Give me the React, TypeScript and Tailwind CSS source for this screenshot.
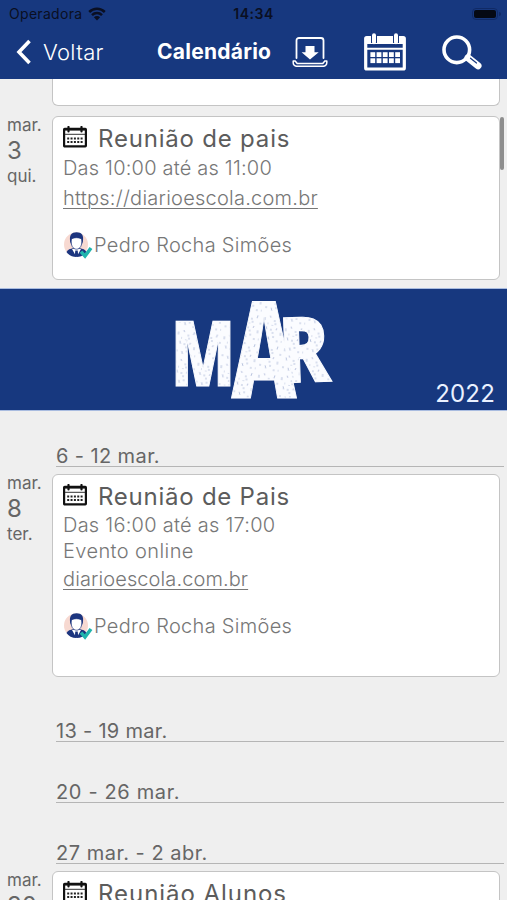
import React from 'react';

interface CalendarEvent {
  month: string;
  day: string;
  weekday: string;
  title: string;
  titleClass: string;
  time?: string;
  timeClass?: string;
  place?: string;
  link?: string;
  linkClass?: string;
  author?: string;
  height: string;
}

const events: Record<string, CalendarEvent> = {
  first: {
    month: 'mar.',
    day: '3',
    weekday: 'qui.',
    title: 'Reunião de pais',
    titleClass: 'tracking-[0.8px]',
    time: 'Das 10:00 até as 11:00',
    timeClass: 'mt-[2px]',
    link: 'https://diarioescola.com.br',
    linkClass: 'mt-[4px] tracking-[0.24px]',
    author: 'Pedro Rocha Simões',
    height: 'h-[164px]',
  },
  second: {
    month: 'mar.',
    day: '8',
    weekday: 'ter.',
    title: 'Reunião de Pais',
    titleClass: 'tracking-[0.75px]',
    time: 'Das 16:00 até as 17:00',
    timeClass: 'mt-[1px] tracking-[0.25px]',
    place: 'Evento online',
    link: 'diarioescola.com.br',
    linkClass: 'mt-[2px] tracking-[0.1px]',
    author: 'Pedro Rocha Simões',
    height: 'h-[203px]',
  },
  third: {
    month: 'mar.',
    day: '30',
    weekday: 'qua.',
    title: 'Reunião Alunos',
    titleClass: 'tracking-[0.95px]',
    height: 'h-[164px]',
  },
};

const WifiIcon = () => (
  <svg className="h-[14px] w-[18px]" viewBox="0 0 18 14">
    <path d="M9 13.4 5.9 10.2a4.4 4.4 0 0 1 6.2 0z" fill="#0a0f22" />
    <path d="M4 8.1a7.2 7.2 0 0 1 10 0M1.2 5a11.2 11.2 0 0 1 15.6 0" fill="none" stroke="#0a0f22" strokeWidth="2.5" />
  </svg>
);

const DownloadIcon = () => (
  <svg className="h-[32px] w-[36px]" viewBox="0 0 36 32" fill="none" stroke="#fff" strokeLinecap="round" strokeLinejoin="round">
    <path d="M4.5 22V4.5A2.5 2.5 0 0 1 7 2h22a2.5 2.5 0 0 1 2.5 2.5V22" strokeWidth="1.8" />
    <path d="M1.2 25v1.7a3.5 3.5 0 0 0 3.5 3.500h26.600a3.500 3.500 0 0 0 3.500-3.500V25M1.200 25h2l2 2.500h25.600l2-2.500h2" strokeWidth="1.500" />
    <path d="M13.500 10h9v6.200h4.200L18 23.500 9.600 16.200h3.900z" fill="#fff" stroke="none" />
  </svg>
);

const CalendarIcon = () => (
  <svg className="h-[38px] w-[42px]" viewBox="0 0 42 38">
    <rect x="1.700" y="4.500" width="38.600" height="31.500" rx="1" fill="none" stroke="#fff" strokeWidth="3.200" />
    <rect x="1" y="4" width="40" height="7" fill="#fff" />
    <path d="M2 15.800h38" stroke="#fff" strokeWidth="2" />
    <path d="M10 3v7M32 3v7" stroke="#17387f" strokeWidth="6" />
    <path d="M10 2.200v7M32 2.200v7" stroke="#fff" strokeWidth="4" strokeLinecap="round" />
    {[7, 13.2, 19.4, 25.6, 31.8].map((x) => (
      <g key={x} fill="#fff">
        <rect x={x - 0.6} y="19.200" width="4.800" height="4.800" />
        <rect x={x - 0.6} y="25.300" width="4.800" height="4.800" />
      </g>
    ))}
  </svg>
);

const SearchIcon = () => (
  <svg className="h-[35px] w-[40px]" viewBox="0 0 40 35">
    <circle cx="14.800" cy="14.800" r="12.800" fill="none" stroke="#fff" strokeWidth="3.600" />
    <path d="m26 22.800 10 8" stroke="#fff" strokeWidth="7" strokeLinecap="round" />
    <path d="m28.500 23.200 6 4.800" stroke="#17387f" strokeWidth="1.200" strokeLinecap="round" />
  </svg>
);

const EventIcon = () => (
  <svg className="-mt-[4px] h-[22px] w-[24px] shrink-0" viewBox="0 0 24 22">
    <rect x="1.100" y="2.900" width="21.800" height="17.500" rx="0.600" fill="none" stroke="#111" strokeWidth="2.200" />
    <path d="M1 3.500h22" stroke="#111" strokeWidth="2.200" />
    <path d="M2 8.300h20" stroke="#333" strokeWidth="1" />
    <path d="M5.500 1v4.500M18.500 1v4.500" stroke="#111" strokeWidth="2.200" strokeLinecap="round" />
    <path d="M4.200 12.500h15.800M4.200 16h15.800" stroke="#222" strokeWidth="2.100" strokeDasharray="2 1.350" />
  </svg>
);

const AuthorIcon = () => (
  <svg className="h-[28px] w-[30px] shrink-0" viewBox="0 0 30 28">
    <circle cx="12" cy="13.500" r="12" fill="#f7d9d1" />
    <path d="M2.500 21c1-2.500 4-3.200 6.500-3.700h7c2.500.5 5.500 1.200 6.500 3.700-2.200 3-5.600 5-10 5s-8-2-10-5z" fill="#1c357f" />
    <path d="m8 18 4.500 8L17 18z" fill="#fff" />
    <path d="m11.300 19.500h2.400l.5 5-1.700 1.500-1.700-1.500z" fill="#1c357f" />
    <path d="M6.200 11C5 3.900 7.500 1.300 12.600 1.300S20 3.900 18.800 11l-1 2.500H7.300z" fill="#1c357f" />
    <path d="M7.400 8c1.300-.5 2.200-1.300 5.100-1.300s3.800.8 5.100 1.300c.9 6.100-1.300 10.200-5.100 10.200S6.500 14.100 7.400 8z" fill="#fff" stroke="#1c357f" strokeWidth=".7" />
    <path d="m17 20.600 4 4.500L27 17" fill="none" stroke="#20b5ad" strokeWidth="3.500" />
  </svg>
);

const MonthArt = () => (
  <svg className="h-[110px] w-[170px] overflow-visible" viewBox="0 0 170 110" fontFamily="'Open Sans', sans-serif" fontWeight="800">
    <defs>
      <pattern id="chalk" width="23" height="29" patternUnits="userSpaceOnUse" patternTransform="rotate(6)">
        <rect width="23" height="29" fill="#fbfcff" />
        <path
          d="M2 3v3M7 1l1 2M12 5v2M13 8v2M18 2l-1 3M21 9v2M4 12l1 3M9 14v2M10 10v1M15 13l-1 2M19 17v3M2 21v2M7 22l1 3M12 21v2M16 25v2M5 9h1M10 18h2M20 26h1"
          stroke="#8a9ac6"
          strokeWidth=".6"
        />
      </pattern>
    </defs>
    <g stroke="#fbfcff" strokeWidth="1.200">
      <text transform="translate(3 91)" fontSize="91" textLength="64" lengthAdjust="spacingAndGlyphs" fill="url(#chalk)">M</text>
      <text transform="translate(112 88) rotate(-2)" fontSize="91" textLength="51" lengthAdjust="spacingAndGlyphs" fill="url(#chalk)">R</text>
      <text transform="translate(63.500 103)" fontSize="134" textLength="65" lengthAdjust="spacingAndGlyphs" fill="url(#chalk)">A</text>
    </g>
  </svg>
);

const Header: React.FC = () => (
  <header className="h-[79px] shrink-0 bg-[#17387f]">
    <div className="grid h-[27px] grid-cols-3 items-center pl-[9px] pr-[6px] text-[14px] leading-none text-[#0a0f22]">
      <div className="flex items-center gap-[6px]">
        <span className="tracking-[0.3px]">Operadora</span>
        <WifiIcon />
      </div>
      <span className="-ml-[3px] text-center font-semibold tracking-[0.5px]">14:34</span>
      <div className="flex items-center justify-end gap-px">
        <div className="h-[12px] w-[26px] rounded-[4px] border border-[#102a66] bg-[#050914] bg-clip-content p-px" />
        <div className="h-[4px] w-[2px] rounded-r bg-[#102a66]" />
      </div>
    </div>
    <div className="flex h-[50px] items-center text-white">
      <svg className="ml-[16px] h-[26px] w-[16px]" viewBox="0 0 16 26" fill="none">
        <path d="M13.500 2 3 13l10.500 11" stroke="#fff" strokeWidth="3.600" />
      </svg>
      <span className="ml-[11px] w-[114px] text-[22px] font-light tracking-[0.3px]">Voltar</span>
      <h1 className="w-[135px] whitespace-nowrap text-[21px] font-bold tracking-[0.25px]">Calendário</h1>
      <DownloadIcon />
      <div className="ml-[36px]"><CalendarIcon /></div>
      <div className="ml-[36px]"><SearchIcon /></div>
    </div>
  </header>
);

const EventRow: React.FC<{ event: CalendarEvent }> = ({ event }) => (
  <div className="flex shrink-0">
    <div className="flex w-[52px] shrink-0 flex-col pl-[7px] text-[17px] leading-[18px] text-[#666]">
      <span>{event.month}</span>
      <span className="mb-[3px] mt-[4px] text-[24px] leading-[26px]">{event.day}</span>
      <span>{event.weekday}</span>
    </div>
    <div className={`w-[448px] rounded-[6px] border-[1.5px] border-[#c4c4c4] bg-white pl-[10px] pt-[8px] ${event.height}`}>
      <div className="flex items-center gap-[11px]">
        <EventIcon />
        <span className={`text-[24px] leading-[28px] text-[#5c5c5c] ${event.titleClass}`}>{event.title}</span>
      </div>
      <div className="flex flex-col items-start text-[20px] font-light leading-[26px] tracking-[0.2px] text-[#777]">
        {event.time && <span className={event.timeClass}>{event.time}</span>}
        {event.place && <span className="tracking-[0.4px]">{event.place}</span>}
        {event.link && <a className={`underline decoration-1 underline-offset-[3px] ${event.linkClass}`}>{event.link}</a>}
      </div>
      {event.author && (
        <div className="ml-px mt-[20px] flex items-center text-[20px] font-light leading-[28px] tracking-[0.3px] text-[#777]">
          <AuthorIcon />
          <span>{event.author}</span>
        </div>
      )}
    </div>
  </div>
);

const WeekLabel: React.FC<{ children: React.ReactNode; className: string }> = ({ children, className }) => (
  <div className={`ml-[56px] mr-[3px] h-[25px] shrink-0 border-b-[1.5px] border-[#b5b5b5] text-[20px] leading-[29px] text-[#666] ${className}`}>
    {children}
  </div>
);

const App: React.FC = () => {
  return (
    <div className="relative flex h-[900px] w-[507px] flex-col overflow-hidden bg-[#efefef] font-['Inter',sans-serif]">
      <Header />
      <div className="ml-[52px] h-[27px] w-[448px] shrink-0 rounded-b-[6px] border-[1.5px] border-t-0 border-[#c4c4c4] bg-white" />
      <div className="mt-[10px] shrink-0">
        <EventRow event={events.first} />
      </div>

      <section className="mt-[8px] flex h-[123px] shrink-0 items-end justify-between border-y border-[#a9bce0] bg-[#17387f]">
        <div className="mb-[5px] ml-[168px]"><MonthArt /></div>
        <span className="mb-[3px] mr-[12px] text-[24px] leading-[26px] tracking-[0.2px] text-[#eaf1ff]">2022</span>
      </section>

      <div className="mt-[31px]"><WeekLabel className="tracking-[0.4px]">6 - 12 mar.</WeekLabel></div>
      <div className="mt-[7px]"><EventRow event={events.second} /></div>
      <div className="mt-[40px]"><WeekLabel className="tracking-[0.3px]">13 - 19 mar.</WeekLabel></div>
      <div className="mt-[36px]"><WeekLabel className="tracking-[0.65px]">20 - 26 mar.</WeekLabel></div>
      <div className="mt-[36px]"><WeekLabel className="tracking-[0.5px]">27 mar. - 2 abr.</WeekLabel></div>
      <div className="mt-[7px]"><EventRow event={events.third} /></div>

      {/* scroll indicator */}
      <div className="absolute right-[3px] top-[117px] h-[53px] w-[4px] rounded-full bg-[#8e8e8e]" />
    </div>
  );
};

export default App;
